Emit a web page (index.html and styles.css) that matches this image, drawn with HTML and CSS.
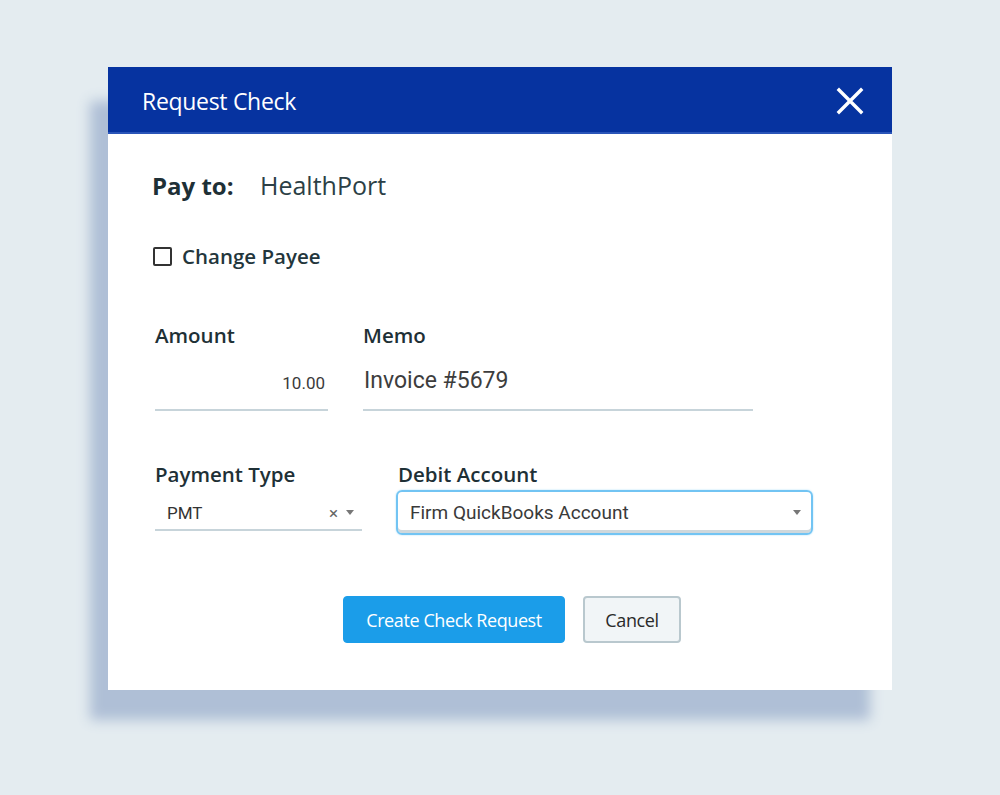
FILE: index.html
```html
<!DOCTYPE html>
<html lang="en">
<head>
    <meta charset="UTF-8">
    <meta name="viewport" content="width=device-width, initial-scale=1.0">
    <title>Request Check</title>
    <link rel="stylesheet" href="styles.css">
</head>
<body>

    <div class="page">
        <div class="dialog">
            <div class="dialog-header">
                <h2>Request Check</h2>
                <button class="close" type="button" aria-label="Close">
                    <svg width="28" height="28" viewBox="0 0 28 28">
                        <path d="M3 3 L25 25 M25 3 L3 25" stroke="#fff" stroke-width="3.4" stroke-linecap="square" fill="none"/>
                    </svg>
                </button>
            </div>

            <div class="dialog-body">
                <!-- Odbiorca -->
                <div class="pay-to">
                    <span class="pay-label">Pay to:</span>
                    <span class="pay-name">HealthPort</span>
                </div>

                <label class="check-row">
                    <span class="checkbox"></span>
                    Change Payee
                </label>

                <!-- Kwota i memo -->
                <div class="field-row first">
                    <div class="field amount">
                        <label>Amount</label>
                        <div class="text-input align-right">10.00</div>
                    </div>
                    <div class="field memo">
                        <label>Memo</label>
                        <div class="text-input big">Invoice #5679</div>
                    </div>
                </div>

                <!-- Typ płatności i konto -->
                <div class="field-row second">
                    <div class="field payment-type">
                        <label>Payment Type</label>
                        <div class="select-input">
                            <span>PMT</span>
                            <span class="select-icons"><span class="clear">×</span><span class="caret"></span></span>
                        </div>
                    </div>
                    <div class="field debit">
                        <label>Debit Account</label>
                        <div class="select-input focused">
                            <span>Firm QuickBooks Account</span>
                            <span class="select-icons"><span class="caret"></span></span>
                        </div>
                    </div>
                </div>

                <div class="actions">
                    <button class="btn btn-primary" type="button">Create Check Request</button>
                    <button class="btn btn-default" type="button">Cancel</button>
                </div>
            </div>
        </div>
    </div>

</body>
</html>
```

FILE: styles.css
```css
body {
    margin: 0;
    padding: 0;
    background-color: #e4ecf0;
    font-family: 'Open Sans', sans-serif;
    color: #1e3036;
}

.page {
    padding: 67px 0 0 108px;
    height: 728px;
}

.dialog {
    width: 784px;
    height: 623px;
    background-color: #fff;
    box-shadow: -20px 32px 12px -2px #afbfd6;
}

.dialog-header {
    height: 67px;
    background-color: #0633a0;
    display: flex;
    align-items: center;
    justify-content: space-between;
    padding: 0 28px 0 34px;
    box-shadow: inset 0 -2px 0 #2a55b8;
}

.dialog-header h2 {
    margin: 0;
    font-size: 23px;
    font-weight: 400;
    color: #fff;
    letter-spacing: -0.3px;
}

.close {
    border: 0;
    background: none;
    padding: 0;
    display: flex;
    cursor: pointer;
}

.dialog-body {
    padding: 35px 0 0 44px;
}

.pay-to {
    display: flex;
    align-items: center;
    height: 32px;
    font-size: 24px;
}

.pay-label {
    font-weight: 700;
    width: 108px;
    color: #1e3036;
}

.pay-name {
    font-size: 25px;
    color: #2c3f46;
}

.check-row {
    display: flex;
    align-items: center;
    gap: 10px;
    margin-top: 43px;
    height: 24px;
    font-size: 20.5px;
    font-weight: 600;
    color: #23363c;
    padding-left: 1px;
}

.checkbox {
    width: 15px;
    height: 15px;
    border: 2px solid #333;
    border-radius: 2px;
}

.field-row {
    display: flex;
    padding-left: 3px;
}

.field-row.first {
    margin-top: 55px;
    gap: 35px;
}

.field-row.second {
    margin-top: 51px;
    gap: 34px;
}

.field label {
    display: block;
    font-size: 20.5px;
    font-weight: 600;
    line-height: 24px;
    color: #1e3036;
}

.field-row.first label {
    margin-bottom: 18px;
}

.field-row.second label {
    margin-bottom: 4px;
}

.amount {
    width: 173px;
}

.memo {
    width: 390px;
}

.payment-type {
    width: 207px;
}

.debit {
    width: 417px;
}

.debit label {
    padding-left: 2px;
}

.text-input {
    font-family: 'Roboto', sans-serif;
    font-size: 17px;
    line-height: 24px;
    padding: 6px 3px 14px 0;
    color: #3b3b3b;
    border-bottom: 2px solid #c7d4da;
}

.text-input.align-right {
    text-align: right;
}

.text-input.big {
    font-size: 23px;
    padding: 4px 0 16px 1px;
    color: #3d3d3d;
}

.select-input {
    display: flex;
    align-items: center;
    justify-content: space-between;
    height: 41px;
    padding: 6px 8px 0 12px;
    box-sizing: border-box;
    font-family: 'Roboto', sans-serif;
    font-size: 17px;
    color: #333;
    border-bottom: 2px solid #c7d4da;
}

.select-input.focused {
    height: 45px;
    padding: 0 10px 0 12px;
    border: 2px solid #72c4f3;
    border-radius: 6px;
    box-shadow: inset 0 -3px 0 #cfd8dc, 0 0 2px #a8dcf8;
    font-size: 19px;
    color: #3a3a3a;
}

.select-icons {
    display: flex;
    align-items: center;
    gap: 8px;
    color: #666;
}

.clear {
    font-size: 17px;
}

.caret {
    width: 0;
    height: 0;
    border-left: 4px solid transparent;
    border-right: 4px solid transparent;
    border-top: 5px solid #777;
}

.actions {
    display: flex;
    gap: 18px;
    margin-top: 61px;
    padding-left: 191px;
}

.btn {
    height: 47px;
    border-radius: 4px;
    font-family: 'Open Sans', sans-serif;
    font-size: 18px;
    cursor: pointer;
    letter-spacing: -0.4px;
}

.btn-primary {
    width: 222px;
    background-color: #1b9de9;
    border: 1px solid #1b9de9;
    color: #fff;
}

.btn-default {
    width: 98px;
    background-color: #f1f5f7;
    border: 2px solid #b9c8ce;
    color: #2a2a2a;
}
```
